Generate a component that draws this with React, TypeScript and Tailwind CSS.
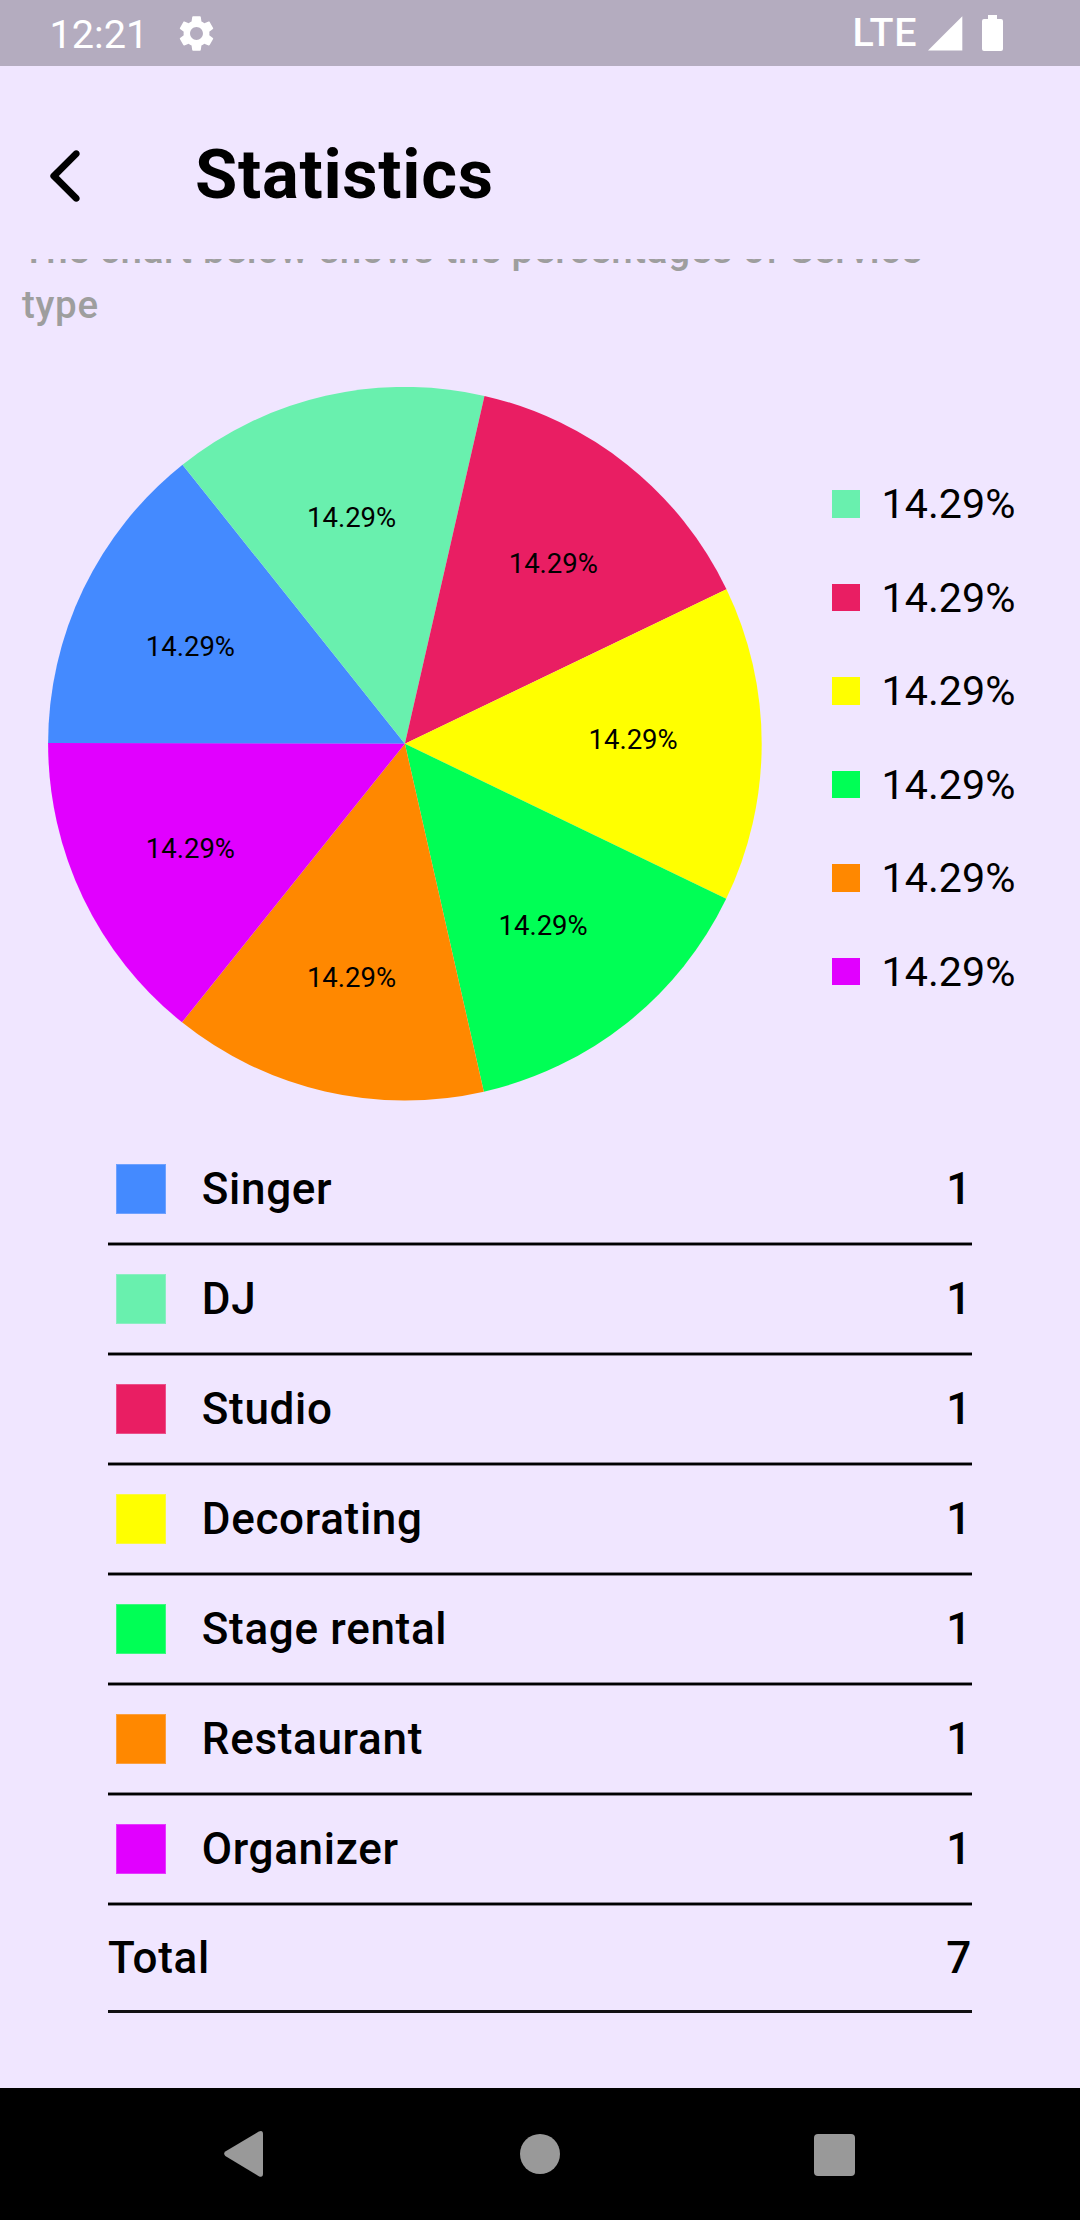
type Service = {
  name: string;
  count: number;
  percent: number;
  fill: string;
  swatch: string;
  chip: string;
  label: { x: number; y: number };
};

const services: Service[] = [
  { name: "Singer", count: 1, percent: 14.29, fill: "#448aff", swatch: "bg-[#448aff]", chip: "bg-[#448aff] border-[#448aff]/75", label: { x: 142.4, y: 269 } },
  { name: "DJ", count: 1, percent: 14.29, fill: "#69f0ae", swatch: "bg-[#69f0ae]", chip: "bg-[#69f0ae] border-[#69f0ae]/75", label: { x: 303.6, y: 140 } },
  { name: "Studio", count: 1, percent: 14.29, fill: "#e91e63", swatch: "bg-[#e91e63]", chip: "bg-[#e91e63] border-[#e91e63]/75", label: { x: 505.3, y: 186 } },
  { name: "Decorating", count: 1, percent: 14.29, fill: "#ffff00", swatch: "bg-[#ffff00]", chip: "bg-[#ffff00] border-[#ffff00]/75", label: { x: 585.1, y: 362 } },
  { name: "Stage rental", count: 1, percent: 14.29, fill: "#00ff55", swatch: "bg-[#00ff55]", chip: "bg-[#00ff55] border-[#00ff55]/75", label: { x: 495.1, y: 548 } },
  { name: "Restaurant", count: 1, percent: 14.29, fill: "#ff8800", swatch: "bg-[#ff8800]", chip: "bg-[#ff8800] border-[#ff8800]/75", label: { x: 303.5, y: 600 } },
  { name: "Organizer", count: 1, percent: 14.29, fill: "#e100ff", swatch: "bg-[#e100ff]", chip: "bg-[#e100ff] border-[#e100ff]/75", label: { x: 142.4, y: 471 } },
];

const CX = 356.9;
const CY = 356.7;
const R = 356.8;

function slicePath(index: number, percent: number) {
  const sweep = (percent / 100) * 2 * Math.PI;
  const a0 = Math.PI + index * sweep;
  const a1 = a0 + sweep;
  const p = (a: number) => `${(CX + R * Math.cos(a)).toFixed(2)} ${(CY + R * Math.sin(a)).toFixed(2)}`;
  return `M${CX} ${CY}L${p(a0)}A${R} ${R} 0 0 1 ${p(a1)}Z`;
}

function StatusBar() {
  return (
    <div className="flex h-[66px] shrink-0 items-center bg-[#b4acbf] text-white">
      <span className="ml-[49.5px] w-[99.5px] pt-1 text-[39.7px] leading-[60px]">12:21</span>
      <svg className="ml-[26px] size-[43px]" viewBox="0 0 24 24" fill="currentColor">
        <path d="M19.14 12.94c.04-.3.06-.61.06-.94 0-.32-.02-.64-.07-.94l2.03-1.58c.18-.14.23-.41.12-.61l-1.92-3.32c-.12-.22-.37-.29-.59-.22l-2.39.96c-.5-.38-1.03-.7-1.62-.94l-.36-2.54c-.04-.24-.24-.41-.48-.41h-3.84c-.24 0-.43.17-.47.41l-.36 2.54c-.59.24-1.13.57-1.62.94l-2.39-.96c-.22-.08-.47 0-.59.22L2.74 8.87c-.12.21-.08.47.12.61l2.03 1.58c-.05.3-.09.63-.09.94s.02.64.07.94l-2.03 1.58c-.18.14-.23.41-.12.61l1.92 3.32c.12.22.37.29.59.22l2.39-.96c.5.38 1.03.7 1.62.94l.36 2.54c.05.24.24.41.48.41h3.84c.24 0 .44-.17.47-.41l.36-2.54c.59-.24 1.13-.56 1.62-.94l2.39.96c.22.08.47 0 .59-.22l1.92-3.32c.12-.22.07-.47-.12-.61l-2.01-1.58zM12 15.6c-1.98 0-3.6-1.62-3.6-3.6s1.62-3.6 3.6-3.6 3.6 1.62 3.6 3.6-1.62 3.6-3.6 3.6z" />
      </svg>
      <span className="ml-auto pb-px text-[39.4px] font-medium leading-[60px] tracking-[0.6px]">LTE</span>
      <svg className="ml-[11px] h-[35px] w-[35px]" viewBox="0 0 35 35" fill="currentColor">
        <path d="M34.3 0.2V34.5H0Z" />
      </svg>
      <svg className="ml-[19px] mr-[77px] h-9 w-[21px]" viewBox="0 0 21 36" fill="currentColor">
        <path d="M6 0h9v4h4q2 0 2 2v28q0 2-2 2H2q-2 0-2-2V6q0-2 2-2h4z" />
      </svg>
    </div>
  );
}

function Header() {
  return (
    <header className="flex h-[193px] shrink-0 items-center pl-[33px] pt-[27px]">
      <button aria-label="Back" className="size-[66px]">
        <svg className="size-[66px]" viewBox="0 0 24 24" fill="black">
          <path d="M16.62 2.99c-.49-.49-1.28-.49-1.77 0L6.54 11.3c-.39.39-.39 1.02 0 1.41l8.31 8.31c.49.49 1.28.49 1.77 0s.49-1.28 0-1.77L9.38 12l7.25-7.25c.48-.48.48-1.28-.01-1.76z" />
        </svg>
      </button>
      <h1 className="ml-24 pb-[3px] text-[68.75px] font-bold leading-[80px] tracking-[0.7px]">Statistics</h1>
    </header>
  );
}

function PieChart() {
  return (
    <svg className="h-[714px] w-[714px] shrink-0" viewBox="0 0 714 714">
      {services.map((s, i) => (
        <path key={s.name} d={slicePath(i, s.percent)} fill={s.fill} />
      ))}
      {services.map((s) => (
        <text key={s.name} x={s.label.x} y={s.label.y} textAnchor="middle" className="fill-black text-[27.5px]">
          {s.percent}%
        </text>
      ))}
    </svg>
  );
}

function Legend() {
  return (
    <ul className="ml-[70px] pt-[70.4px]">
      {services.slice(1).map((s) => (
        <li key={s.name} className="flex h-[93.5px] items-center">
          <span className={`h-[27.5px] w-7 ${s.swatch}`} />
          <span className="ml-[21.6px] text-[41.25px] leading-[54px]">{s.percent}%</span>
        </li>
      ))}
    </ul>
  );
}

function ServiceTable() {
  const total = services.reduce((sum, s) => sum + s.count, 0);
  return (
    <div className="mx-[108px] mt-[35px] text-[44px] font-medium leading-[60px] tracking-[0.6875px]">
      {services.map((s) => (
        <div key={s.name}>
          <div className="flex h-[106px] items-center pl-2">
            <span className={`size-[50px] border bg-clip-padding ${s.chip}`} />
            <span className="ml-[35.75px]">{s.name}</span>
            <span className="ml-auto">{s.count}</span>
          </div>
          <div className="h-1 border-y border-black/45 bg-black bg-clip-padding" />
        </div>
      ))}
      <div className="flex h-[104px] items-center justify-between">
        <span>Total</span>
        <span>{total}</span>
      </div>
      <div className="h-[3px] bg-[#101012]" />
    </div>
  );
}

function NavBar() {
  return (
    <nav className="flex h-[132px] shrink-0 items-center bg-black text-[#999999]">
      <svg className="ml-[224px] h-[46px] w-[39px]" viewBox="0 0 39 46" fill="currentColor">
        <path d="M1.3 20.6Q-1 22.8 1.3 25L34.8 45.2Q39 47 39 42.5V3.3Q39-1.2 34.8 0.6Z" />
      </svg>
      <span className="ml-[257px] size-10 rounded-full bg-current" />
      <span className="ml-[254px] mt-px h-[42px] w-[41px] rounded-[4px] bg-current" />
    </nav>
  );
}

export default function App() {
  return (
    <div className="flex h-[2220px] w-[1080px] flex-col overflow-hidden bg-[#f0e6ff] font-[Roboto,sans-serif] text-black">
      <StatusBar />
      <Header />
      <main className="min-h-0 flex-1 overflow-hidden">
        <p className="-mt-[37px] ml-[22px] w-[960px] text-[38.5px] font-medium leading-[55px] tracking-[0.6875px] text-[#9e9e9e]">
          The chart below shows the percentages of Service type
        </p>
        <div className="ml-12 mt-[55px] flex items-start">
          <PieChart />
          <Legend />
        </div>
        <ServiceTable />
      </main>
      <NavBar />
    </div>
  );
}
